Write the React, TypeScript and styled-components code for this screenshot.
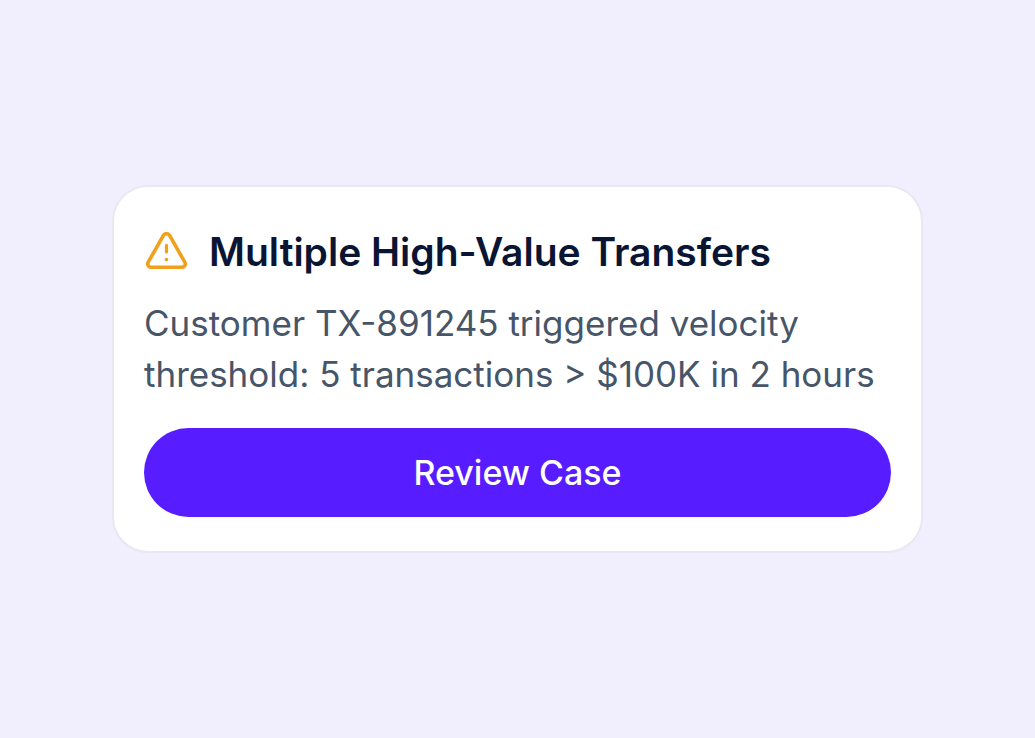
import React from "react";
import styled, { createGlobalStyle } from "styled-components";

const GlobalStyle = createGlobalStyle`
  *, *::before, *::after { box-sizing: border-box; }
  body {
    margin: 0;
    background: #f1effe;
    font-family: Inter, "Liberation Sans", sans-serif;
  }
`;

const Page = styled.main`
  min-height: 100vh;
  display: flex;
  align-items: center;
  justify-content: center;
  padding: 32px 112px;
`;

const Card = styled.article`
  width: 100%;
  max-width: 960px;
  display: flex;
  flex-direction: column;
  padding: 33px 30px 34px;
  background: #ffffff;
  border: 2px solid #e9e7f3;
  border-radius: 36px;
`;

const Header = styled.header`
  display: flex;
  align-items: center;
  gap: 21px;
`;

const WarningIcon = styled.svg`
  flex: none;
  width: 44px;
  height: 44px;
`;

const Title = styled.h2`
  margin: 0;
  color: #0a1433;
  font-size: 39px;
  font-weight: 600;
  line-height: 64px;
`;

const Message = styled.p`
  margin: 14px 0 28px;
  color: #475569;
  font-size: 35px;
  font-weight: 400;
  line-height: 51px;
`;

const Action = styled.button`
  height: 89px;
  border: 0;
  border-radius: 45px;
  background: #571cff;
  color: #ffffff;
  font: 500 34px Inter, "Liberation Sans", sans-serif;
  cursor: pointer;
`;

export default function App() {
  return (
    <>
      <GlobalStyle />
      <Page>
        <Card>
          <Header>
            <WarningIcon viewBox="0 0 44 44" fill="none" stroke="#f0a01c" strokeWidth="3.6" strokeLinecap="round" strokeLinejoin="round" aria-hidden="true">
              <path d="M19.4 5.4a3.6 3.6 0 0 1 6.2 0L40.8 32.2a3.3 3.3 0 0 1-2.9 5H7.1a3.3 3.3 0 0 1-2.9-5Z" />
              <path d="M22.5 15.4v6.6" strokeWidth="3.2" />
              <circle cx="22.5" cy="29.6" r="1.8" fill="#f0a01c" stroke="none" />
            </WarningIcon>
            <Title>Multiple High-Value Transfers</Title>
          </Header>
          <Message>
            Customer TX-891245 triggered velocity threshold: 5 transactions &gt; $100K in 2 hours
          </Message>
          <Action type="button">Review Case</Action>
        </Card>
      </Page>
    </>
  );
}
